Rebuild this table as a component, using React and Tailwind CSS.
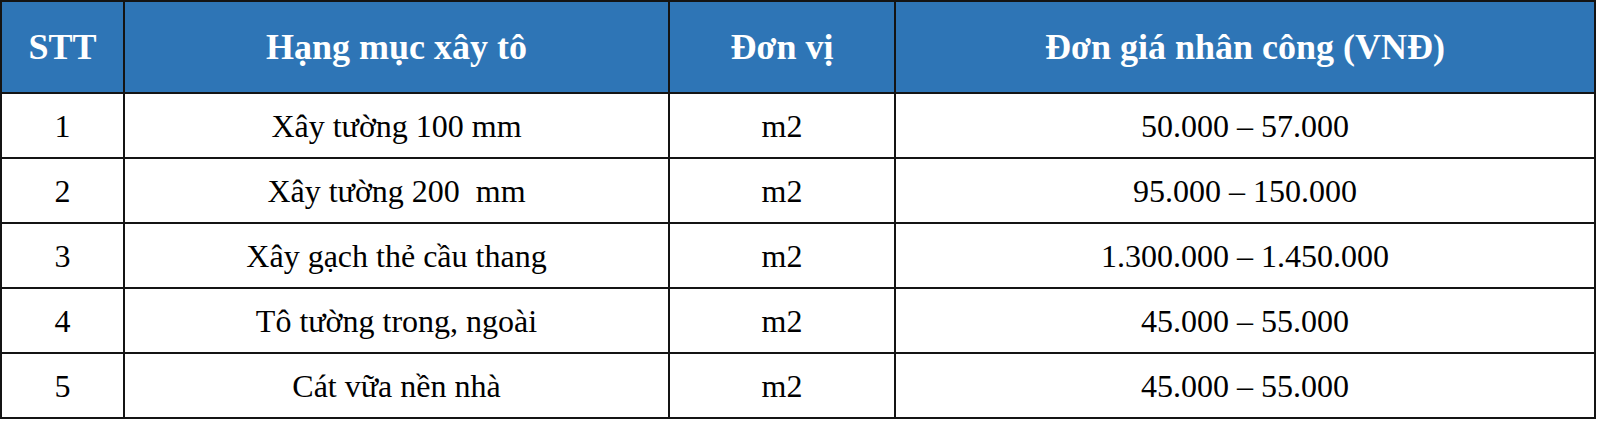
export default function App() {
  const rows = [
    ["1", "Xây tường 100 mm", "m2", "50.000 – 57.000"],
    ["2", "Xây tường 200  mm", "m2", "95.000 – 150.000"],
    ["3", "Xây gạch thẻ cầu thang", "m2", "1.300.000 – 1.450.000"],
    ["4", "Tô tường trong, ngoài", "m2", "45.000 – 55.000"],
    ["5", "Cát vữa nền nhà", "m2", "45.000 – 55.000"],
  ];
  return (
    <div className="w-[1600px] h-[427px] bg-white" style={{ fontFamily: '"Liberation Serif", "Times New Roman", serif' }}>
      <table className="border-collapse w-[1596px] table-fixed border-2 border-[#141414]">
        <colgroup>
          <col className="w-[123px]" />
          <col className="w-[545px]" />
          <col className="w-[226px]" />
          <col />
        </colgroup>
        <thead>
          <tr className="bg-[#2e75b6] text-white font-bold text-[36px]">
            <th className="h-[92px] border-2 border-[#141414] text-center align-middle font-bold">STT</th>
            <th className="h-[92px] border-2 border-[#141414] text-center align-middle font-bold">Hạng mục xây tô</th>
            <th className="h-[92px] border-2 border-[#141414] text-center align-middle font-bold">Đơn vị</th>
            <th className="h-[92px] border-2 border-[#141414] text-center align-middle font-bold">Đơn giá nhân công (VNĐ)</th>
          </tr>
        </thead>
        <tbody>
          {rows.map((r, i) => (
            <tr key={i} className="text-[32px] text-black">
              {r.map((c, j) => (
                <td key={j} className="h-[65px] border-2 border-[#141414] text-center align-middle whitespace-pre leading-none">
                  {c}
                </td>
              ))}
            </tr>
          ))}
        </tbody>
      </table>
    </div>
  );
}
